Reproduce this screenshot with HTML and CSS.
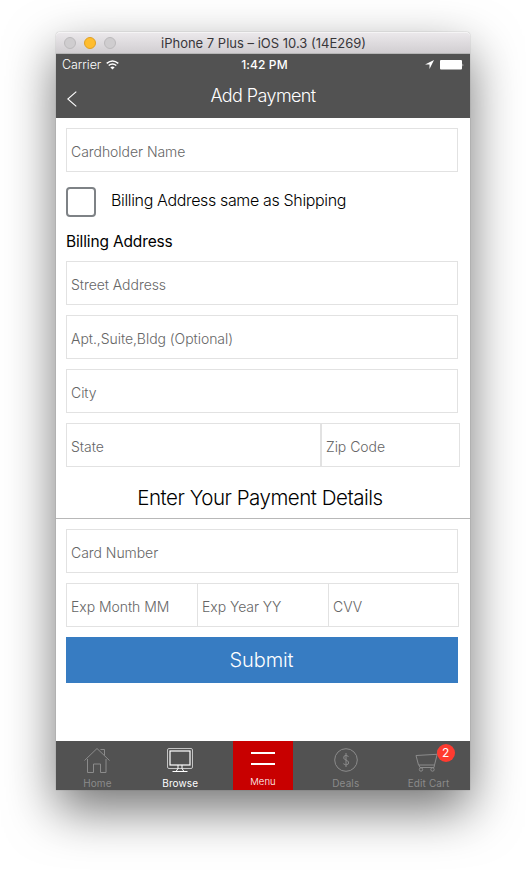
FILE: index.html
```html
<!DOCTYPE html>
<html lang="en">
<head>
<meta charset="utf-8">
<title>Add Payment</title>
<link rel="stylesheet" href="styles.css">
</head>
<body>
<div class="window">
  <div class="titlebar">
    <div class="lights"><i></i><i class="amber"></i><i></i></div>
    <span class="window-title">iPhone 7 Plus – iOS 10.3 (14E269)</span>
  </div>
  <header class="header">
    <div class="status">
      <div class="carrier"><span>Carrier</span>
        <svg width="13" height="10" viewBox="0 0 13 10" fill="none" stroke="#fff" stroke-width="1.5"><path d="M.7 3.3Q6.5-1.4 12.3 3.3M2.7 5.5Q6.5 2.5 10.3 5.5"/><path d="M6.5 9.6 4.3 7.2Q6.5 5.6 8.7 7.2Z" fill="#fff" stroke="none"/></svg>
      </div>
      <span class="clock">1:42 PM</span>
      <div class="power">
        <svg width="9" height="9" viewBox="0 0 8 8"><path d="M8 0 0 4H4V8Z" fill="#fff"/></svg>
        <svg width="24" height="10" viewBox="0 0 24 10" fill="#fff"><rect width="22" height="9.5" rx="1"/><path d="M22.7 3.5Q24 5 22.7 6.5Z"/></svg>
      </div>
    </div>
    <div class="nav">
      <svg class="back" width="10" height="16" viewBox="0 0 10 16" fill="none" stroke="#fff" stroke-width="1.1"><path d="M9.3.7.8 8l8.5 7.3"/></svg>
      <h1>Add Payment</h1>
    </div>
  </header>
  <main class="form">
    <div class="field"><span>Cardholder Name</span></div>
    <label class="same"><span class="box"></span><span class="same-text">Billing Address same as Shipping</span></label>
    <h2>Billing Address</h2>
    <div class="field"><span>Street Address</span></div>
    <div class="field"><span>Apt.,Suite,Bldg (Optional)</span></div>
    <div class="field"><span>City</span></div>
    <div class="row region"><div class="field"><span>State</span></div><div class="field"><span>Zip Code</span></div></div>
    <div class="details"><span>Enter Your Payment Details</span></div>
    <div class="field"><span>Card Number</span></div>
    <div class="row expiry"><div class="field"><span>Exp Month MM</span></div><div class="field"><span>Exp Year YY</span></div><div class="field"><span>CVV</span></div></div>
    <button class="submit"><span>Submit</span></button>
  </main>
  <nav class="tabs">
    <div class="tab"><svg width="28" height="27" viewBox="0 0 28 27" fill="none" stroke="#8b8b8b"><path d="M1.500 13.500 14 1.500l12.500 12M4.500 12v13.500h6v-8.500h7v8.500h5.500V12M17.500 2.500h4v6"/></svg><span>Home</span></div>
    <div class="tab active"><svg width="28" height="27" viewBox="0 0 28 27" fill="none" stroke="#fff"><rect x="1.500" y="1.500" width="25" height="20" rx="1.500" stroke="#c4c4c4"/><rect x="4" y="4" width="20" height="14" stroke-width="1.200"/><path d="M12 18v3.500l-2 3M16 18v3.500l2 3M6.500 24.500h15"/></svg><span>Browse</span></div>
    <div class="tab menu"><svg width="24" height="27" viewBox="0 0 24 27" stroke="#fff" stroke-width="2"><path d="M0 6h24M0 17h24"/></svg><span>Menu</span></div>
    <div class="tab"><svg width="28" height="27" viewBox="0 0 28 27" fill="none" stroke="#8b8b8b"><circle cx="14" cy="13" r="11.300"/><path d="M16.500 9.500Q14 7.300 12 9.200 10.500 12 14 13q4 1.500 2.300 4-2.300 2.200-5-.3M14 6v14"/></svg><span>Deals</span></div>
    <div class="tab"><div class="cart"><svg width="28" height="27" viewBox="0 0 28 27" fill="none" stroke="#8b8b8b"><path d="M26 2h-2.500L19.500 18M1 8.500l21-1.200M1 8.500l2.500 9.500h16M4 18l1 2.500h14l.5-2.500"/><circle cx="6" cy="22.500" r="1.700"/><circle cx="17.500" cy="22.500" r="1.700"/></svg><b>2</b></div><span>Edit Cart</span></div>
  </nav>
</div>
</body>
</html>
```
FILE: styles.css
```css
* { box-sizing: border-box; }
body { margin: 0; height: 870px; overflow: hidden; background: #fff; font-family: Inter, "Liberation Sans", sans-serif; }
span { white-space: nowrap; }
svg { display: block; flex: none; }
.window { width: 414px; height: 758px; margin: 32px 0 0 56px; display: flex; flex-direction: column; background: #fff; border-radius: 4px 4px 0 0; box-shadow: 0 0 1px rgba(0,0,0,.5), 0 20px 50px rgba(0,0,0,.55); }
.titlebar { height: 22px; flex: none; display: flex; align-items: center; border-radius: 4px 4px 0 0; background: linear-gradient(#ebe8eb, #d1ced1); border-top: 1px solid #f5f4f5; border-bottom: 1px solid #b6b6b6; }
.lights { display: flex; gap: 8px; padding-left: 8px; width: 105px; }
.lights i { width: 12px; height: 12px; border-radius: 50%; background: #cfcdcf; border: 1px solid #bcbabc; }
.lights .amber { background: #ffbd2e; border-color: #e0a024; }
.window-title { font-size: 13px; color: #38363a; letter-spacing: 0; }
.header { height: 64px; flex: none; background: #525252; color: #fff; }
.status { height: 20px; display: grid; grid-template-columns: 1fr auto 1fr; align-items: center; padding: 1px 6px 0; font-size: 12px; }
.carrier, .power { display: flex; align-items: center; gap: 5px; }
.carrier span { font-weight: 300; font-size: 12.500px; letter-spacing: -.1px; }
.clock { font-weight: 500; letter-spacing: .1px; padding-left: 3px; }
.power { justify-content: flex-end; gap: 6px; }
.nav { height: 44px; display: grid; grid-template-columns: 1fr auto 1fr; align-items: center; }
.back { margin: 5px 0 0 11px; }
h1 { margin: 0 0 1px; font-size: 18px; font-weight: 300; letter-spacing: -.6px; }
.form { flex: 1; padding: 10px 12px 0 10px; }
.field { height: 44px; padding: 3px 0 0 4px; margin-bottom: 10px; border: 1px solid #e2e2e2; display: flex; align-items: center; font-size: 14px; color: #666; font-weight: 350; letter-spacing: -.05px; }
.same { height: 30px; margin: 15px 0 13px; display: flex; gap: 15px; }
.box { width: 30px; height: 30px; border: 2px solid #7e8286; border-radius: 4px; }
.same-text { font-size: 16px; font-weight: 300; line-height: 26px; letter-spacing: -.35px; }
h2 { margin: 0 0 9px; height: 22px; line-height: 23px; font-size: 15.500px; font-weight: 400; color: #000; letter-spacing: -.15px; }
.row { display: grid; }
.region { grid-template-columns: 255px 139px; }
.expiry { grid-template-columns: 132px 131px 130px; }
.expiry .field + .field { border-left: 0; }
.expiry .field:last-child { padding-left: 4px; }
.details { height: 42px; margin: 0 -12px 10px -10px; display: flex; align-items: center; justify-content: center; border-bottom: 1px solid #b8b8b8; font-size: 20.500px; font-weight: 300; letter-spacing: -.48px; padding-right: 6px; }
.submit { display: block; width: 392px; height: 46px; border: 0; padding: 0 1px 0 0; background: #377cc2; color: #fff; font: 300 20px Inter, sans-serif; letter-spacing: -.1px; }
.tabs { height: 49px; flex: none; background: #525252; display: flex; justify-content: space-around; }
.tab { width: 60px; height: 49px; padding-top: 6px; display: flex; flex-direction: column; align-items: center; color: #8b8b8b; font-size: 10px; }
.tab > span { line-height: 12px; margin-top: 3px; letter-spacing: .1px; }
.active { color: #fff; }
.menu { background: #c80000; color: #fff; }
.tab.menu > span { margin-top: 2px; font-size: 9.500px; font-weight: 300; }
.cart { position: relative; }
.cart b { position: absolute; left: 22px; top: -3px; width: 18px; height: 18px; line-height: 18px; border-radius: 50%; background: #ff3b30; color: #fff; font-size: 12px; font-weight: 400; text-align: center; }
```
